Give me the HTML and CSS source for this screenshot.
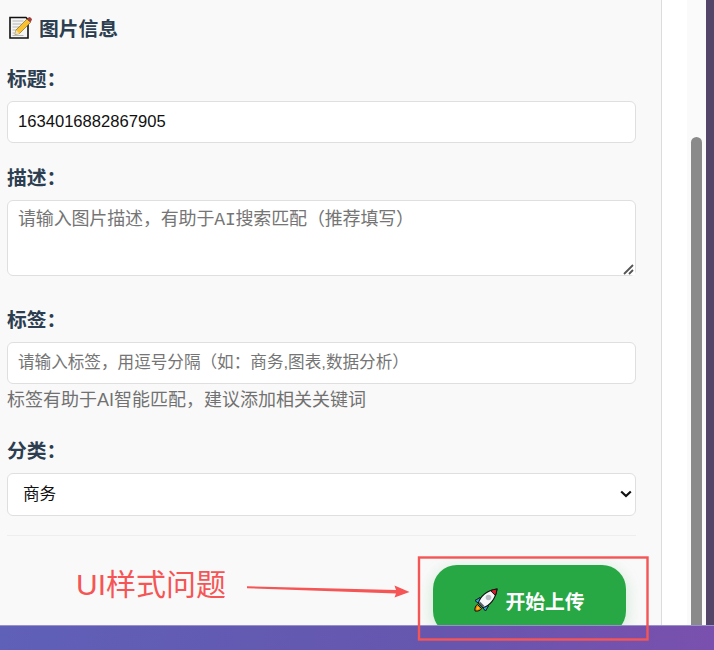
FILE: index.html
```html
<!DOCTYPE html>
<html lang="zh-CN">
<head>
<meta charset="utf-8">
<title>图片信息</title>
<link rel="stylesheet" href="styles.css">
</head>
<body>
<div class="stage">
  <div class="dialog">
    <main class="panel">
      <h2 class="heading">
        <svg class="memo" viewBox="0 0 23 23" aria-hidden="true">
          <path d="M1 1.500h16l2 2V22H1z" fill="#f4f4f4" stroke="#111" stroke-width="1.600"/>
          <path d="M3.500 5h11M3.500 8h9M3.500 11h7M3.500 14h5M3.500 17h4M3.500 19.500h11" stroke="#b5b5b5" stroke-width="1.200"/>
          <path d="M6 18.500l1-4.500L18 3l3.500 3.500L10.500 17.500z" fill="#fbc02d" stroke="#6b5a20" stroke-width=".6"/>
          <path d="M18 3l1.500-1.500a1.500 1.500 0 0 1 2 0l1 1a1.500 1.500 0 0 1 0 2L21.500 6.500z" fill="#a33f3f"/>
          <path d="M6 18.500l1-4.500 3.500 3.500z" fill="#f7dfb4"/>
        </svg>
        <span>图片信息</span>
      </h2>
      <div class="group">
        <label class="label" for="title">标题：</label>
        <input class="field field-input" id="title" type="text" value="1634016882867905">
      </div>
      <div class="group group-area">
        <label class="label" for="desc">描述：</label>
        <div class="control">
          <textarea class="field field-area" id="desc" placeholder="请输入图片描述，有助于AI搜索匹配（推荐填写）"></textarea>
          <svg class="grip" viewBox="0 0 12 11" aria-hidden="true">
            <rect width="12" height="11" fill="#fff"/>
            <path d="M1 10L10 1M6 10l4-4" stroke="#555" stroke-width="1.800" fill="none"/>
          </svg>
        </div>
      </div>
      <div class="group">
        <label class="label" for="tags">标签：</label>
        <input class="field field-input" id="tags" type="text" placeholder="请输入标签，用逗号分隔（如：商务,图表,数据分析）">
        <p class="hint">标签有助于AI智能匹配，建议添加相关关键词</p>
      </div>
      <div class="group">
        <label class="label" for="cat">分类：</label>
        <div class="control">
          <select class="field field-select" id="cat"><option>商务</option></select>
          <svg class="chevron" viewBox="0 0 12 8" aria-hidden="true">
            <path d="M1.200 1.500L6 6l4.800-4.500" stroke="#111" stroke-width="2.200" fill="none"/>
          </svg>
        </div>
      </div>
      <div class="actions">
        <button class="upload" type="button">
          <svg class="rocket" viewBox="0 0 24 24" aria-hidden="true">
            <path d="M1 23c-.500-3 .500-5.500 2.500-6.500L7.500 20.500C6.500 22.500 4 23.500 1 23z" fill="#f57c00" stroke="#111" stroke-width="1"/>
            <path d="M2.500 21.500c0-1.500.500-2.500 1.500-3l1.500 1.500c-.500 1-1.500 1.500-3 1.500z" fill="#ffca28"/>
            <path d="M6 9.500L1 12.500l3.500 3 3.500-1.500zM14.500 18L11.500 23l-3-3.500 1.500-3.500z" fill="#29a9e0" stroke="#111" stroke-width="1"/>
            <path d="M4.500 15C6 8.500 12.500 2.500 23 1 21.500 11.500 15.500 18 9 19.500z" fill="#f5f7f9" stroke="#111" stroke-width="1.200"/>
            <path d="M16.500 2.600C18.500 1.800 20.700 1.300 23 1c-.300 2.300-.800 4.500-1.600 6.500z" fill="#d81b2c" stroke="#111" stroke-width="1"/>
            <circle cx="14.500" cy="9.500" r="2.800" fill="#b8bec4"/>
            <path d="M5.500 14.500l4 4" stroke="#55606a" stroke-width="2"/>
          </svg>
          <span>开始上传</span>
        </button>
      </div>
    </main>
    <div class="gutter"></div>
    <div class="track"><div class="thumb"></div></div>
    <div class="backdrop"></div>
  </div>
  <footer class="footer"></footer>
  <svg class="markup" viewBox="0 0 714 650" aria-hidden="true">
    <rect x="419" y="557.500" width="228.500" height="82" fill="none" stroke="#f55555" stroke-width="2.400"/>
    <path d="M247 586.300 L396 590 394.500 585.500 409.500 592 394.500 597.500 396 593.500 L247 588.200 Z" fill="#f55555"/>
  </svg>
  <div class="note">UI样式问题</div>
</div>
</body>
</html>
```
FILE: styles.css
```css
* { box-sizing: border-box; }
html, body { margin: 0; padding: 0; }
body {
  width: 714px;
  height: 650px;
  overflow: hidden;
  font-family: "Liberation Sans", "Noto Sans CJK SC", sans-serif;
  background: #fff;
}
.stage {
  position: relative;
  display: flex;
  flex-direction: column;
  width: 714px;
  height: 650px;
}
.dialog {
  display: flex;
  height: 625px;
  overflow: hidden;
}
.panel {
  flex: none;
  width: 662px;
  height: 625px;
  padding: 15px 25px 0 7px;
  background: #f9f9f9;
  border-right: 1px solid #dcdcdc;
}
.heading {
  display: flex;
  align-items: center;
  gap: 7px;
  height: 24px;
  margin: 0 0 27px;
  padding-left: 2px;
  font-size: 19.800px;
  font-weight: 700;
  color: #2c3e50;
}
.memo { width: 23px; height: 23px; flex: none; }
.group { margin-bottom: 22px; }
.group-area { margin-bottom: 31px; }
.label {
  display: block;
  height: 25px;
  margin-bottom: 10px;
  padding-top: 1px;
  font-size: 19.800px;
  font-weight: 700;
  line-height: 24px;
  color: #2c3e50;
}
.control { position: relative; }
.field {
  display: block;
  width: 629px;
  border: 1px solid #dfdfdf;
  border-radius: 6px;
  background: #fff;
  color: #111;
  font-size: 16.600px;
  font-family: "Liberation Sans", "Noto Sans CJK SC", sans-serif;
  outline: none;
}
.field::placeholder { color: #757575; opacity: 1; }
.field-input { height: 42px; padding: 0 10px; }
.field-area {
  height: 76px;
  padding: 8px 10px;
  resize: vertical;
  font-family: "Liberation Mono", "Noto Sans CJK SC", monospace;
  font-size: 18px;
  letter-spacing: -.16px;
  line-height: 22px;
}
.grip {
  position: absolute;
  right: 1px;
  bottom: 1px;
  width: 12px;
  height: 11px;
  pointer-events: none;
}
.field-select {
  height: 43px;
  padding: 0 30px 0 15px;
  appearance: none;
}
.chevron {
  position: absolute;
  right: 4px;
  top: 17px;
  width: 12px;
  height: 8px;
  pointer-events: none;
}
.hint {
  margin: 3px 0 0;
  padding-bottom: 2px;
  font-size: 18px;
  line-height: 27px;
  color: #717171;
}
.actions {
  display: flex;
  justify-content: flex-end;
  width: 629px;
  height: 90px;
  margin-top: -3px;
  padding-top: 29px;
  border-top: 1px solid #eeeeee;
}
.upload {
  display: flex;
  align-items: center;
  justify-content: center;
  gap: 7px;
  width: 193px;
  height: 70px;
  margin-right: 10px;
  border: 0;
  border-radius: 24px;
  background: #28a745;
  box-shadow: 0 4px 16px rgba(40, 167, 69, .22);
  color: #fff;
  font-family: "Liberation Sans", "Noto Sans CJK SC", sans-serif;
  font-size: 19.800px;
  font-weight: 700;
}
.rocket { width: 24px; height: 24px; flex: none; }
.gutter { flex: none; width: 25px; background: #fff; }
.track {
  flex: none;
  width: 19px;
  padding: 137px 4px 0 4px;
  background: #fafafa;
}
.thumb {
  height: 600px;
  border-radius: 6px 6px 0 0;
  background: #8a8a8a;
}
.backdrop { flex: 1; background: #524567; }
.footer {
  flex: 1;
  border-top: 1px solid #9a90cf;
  background: linear-gradient(100deg, #5f60b8 0%, #6656ae 60%, #7a50ae 100%);
}
.markup {
  position: absolute;
  left: 0;
  top: 0;
  width: 714px;
  height: 650px;
  pointer-events: none;
}
.note {
  position: absolute;
  left: 76px;
  top: 563px;
  font-size: 30px;
  line-height: 44px;
  color: #f55555;
}
```
